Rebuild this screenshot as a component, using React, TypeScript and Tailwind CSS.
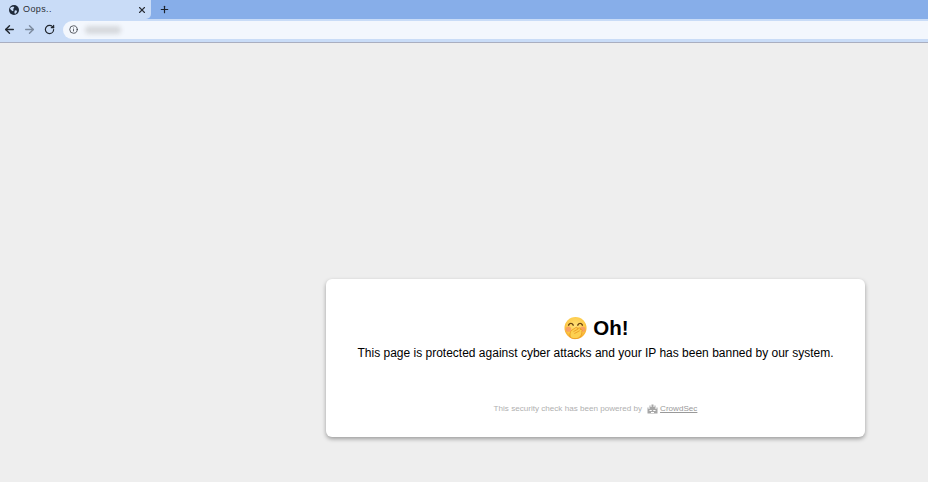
import { ArrowLeft, ArrowRight, Info, Plus, RotateCw, X } from "lucide-react";

const Globe = () => (
  <svg width="10" height="10" viewBox="0 0 16 16" className="shrink-0">
    <circle cx="8" cy="8" r="8" fill="#1f2a3a" />
    <path d="M3 3.5 7 2.5 8.5 4.5 6.5 6.5 7.5 8.5 5.5 10 3 7.5 1.5 6ZM9.5 8.5 13 9 12 12.5 9.5 14.5 8.5 11.5Z" fill="#c9dcf7" />
  </svg>
);

const ShushEmoji = () => (
  <svg width="23" height="24" viewBox="0 0 24 24" className="shrink-0">
    <defs>
      <radialGradient id="face" cx="50%" cy="40%" r="60%">
        <stop offset="0%" stopColor="#ffe07a" />
        <stop offset="70%" stopColor="#fdcb4a" />
        <stop offset="100%" stopColor="#f5a623" />
      </radialGradient>
    </defs>
    <circle cx="12" cy="12" r="11.5" fill="url(#face)" />
    <circle cx="4.6" cy="13.2" r="2.8" fill="#f58f6b" opacity="0.7" />
    <circle cx="19.4" cy="13.2" r="2.8" fill="#f58f6b" opacity="0.7" />
    <path d="M4.8 9C6 6.6 8.4 6.6 9.6 9M14.4 9C15.6 6.6 18 6.6 19.2 9" fill="none" stroke="#6b4513" strokeWidth="1.5" strokeLinecap="round" />
    <path d="M6.5 21.5C5.8 18.5 6.4 15.6 8 14.4L12.4 11.4C13.4 10.8 14.4 11.8 13.9 12.6L16 11.9C17 11.7 17.7 12.8 16.9 13.5L18 13.5C19 13.7 19.2 14.8 18.4 15.3L18.6 15.8C19 17 18.2 19.8 16.6 21.4C14.2 23.6 9 23.8 6.5 21.5Z" fill="#fdd050" stroke="#e8911c" strokeWidth="0.8" />
    <path d="M10.2 15.6 14.6 13.1M11.2 17.6 16 15" fill="none" stroke="#e8911c" strokeWidth="0.8" strokeLinecap="round" />
  </svg>
);

const CrowdSecLogo = () => (
  <svg width="11" height="10" viewBox="0 0 22 20" className="shrink-0">
    <path d="M1 19V7H3V10H5V3H7V6H9V1H13V6H15V3H17V10H19V7H21V19Z" fill="#a6a6a6" />
    <path d="M5 12H9.5V14H5ZM12.5 12H17V14H12.5ZM8 16H14V18H8Z" fill="#fff" />
  </svg>
);

export default function App() {
  return (
    <div className="flex h-[482px] w-[928px] flex-col overflow-hidden bg-[#eeeeee] font-['Liberation_Sans',sans-serif]">
      <div className="flex h-[19px] items-stretch bg-[#87aee9]">
        <div className="flex w-[151px] items-center rounded-br-[5px] bg-[#c9dcf7] pl-[9px] pr-[4px]">
          <Globe />
          <span className="ml-[4px] text-[9px] tracking-[0.4px] text-[#2b2f36]">Oops..</span>
          <X size={10} strokeWidth={2.6} className="ml-auto text-[#2b2f36]" />
        </div>
        <div className="ml-[8px] flex items-center">
          <Plus size={11} strokeWidth={2.6} className="text-[#1c222b]" />
        </div>
      </div>
      <div className="flex h-[24px] items-center border-b border-[#a9aec0] bg-[#c9dcf7] pb-[2px] pl-[3px]">
        <ArrowLeft size={13} strokeWidth={2.6} className="text-[#20262e]" />
        <ArrowRight size={13} strokeWidth={2.6} className="ml-[7px] text-[#7c8a9e]" />
        <RotateCw size={11} strokeWidth={2.6} className="ml-[8px] text-[#20262e]" />
        <div className="ml-[8px] flex h-[18px] flex-1 items-center rounded-l-full bg-[#f3f7fd] pl-[6px]">
          <Info size={9} className="text-[#2b2f36]" />
          <div className="ml-[7px] h-[8px] w-[36px] rounded-sm bg-[#d6d9dd] blur-[2px]" />
        </div>
      </div>
      <main className="flex flex-1 items-start pl-[326px] pt-[236px]">
        <div className="flex h-[158px] w-[539px] flex-col items-center rounded-[6px] bg-white pt-[35px] shadow-[0_2px_4px_rgba(0,0,0,0.35)]">
          <h1 className="flex items-center gap-[6px] pl-[2px] text-[20.5px] font-bold leading-[28px] text-black">
            <ShushEmoji />
            Oh!
          </h1>
          <p className="mt-[3px] text-[12px] leading-[16px] text-black">
            This page is protected against cyber attacks and your IP has been banned by our system.
          </p>
          <div className="mt-[42px] flex items-center text-[8.1px] leading-[12px] text-[#b0b0b0]">
            <span>This security check has been powered by</span>
            <span className="ml-[5px] flex items-center gap-[2px] text-[#999999]">
              <CrowdSecLogo />
              <a className="underline">CrowdSec</a>
            </span>
          </div>
        </div>
      </main>
    </div>
  );
}
